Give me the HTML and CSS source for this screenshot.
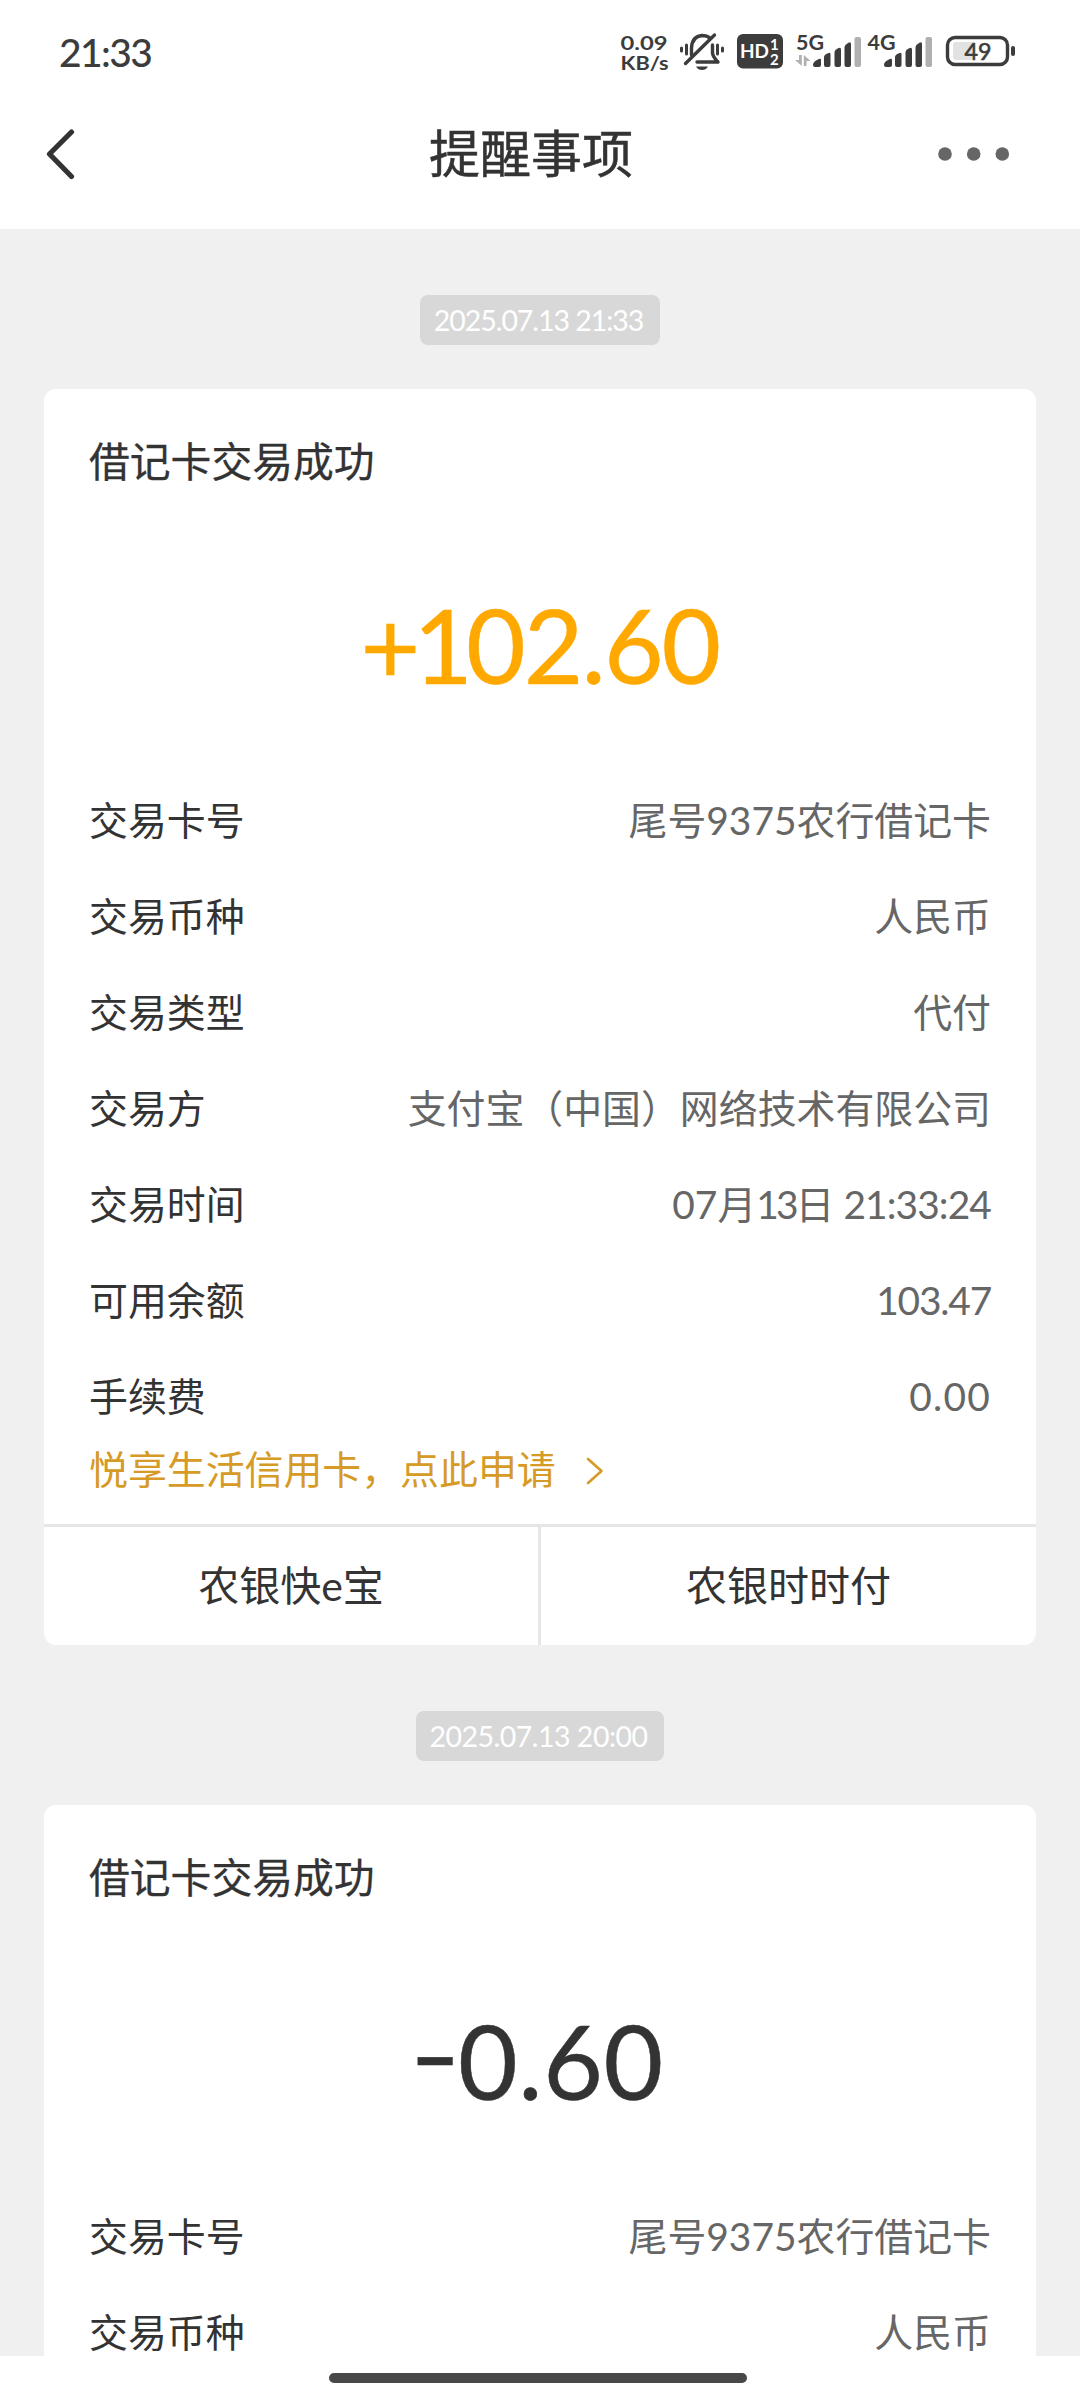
FILE: index.html
```html
<!DOCTYPE html>
<html lang="zh-CN">
<head>
<meta charset="UTF-8">
<title>提醒事项</title>
<link rel="stylesheet" href="styles.css">
</head>
<body>
<div class="status">
  <span class="clock">21:33</span>
  <svg class="status-icons" width="400" height="56" viewBox="616 25 400 56">
    <g class="net">
      <text x="620.5" y="51" textLength="47" lengthAdjust="spacingAndGlyphs">0.09</text>
      <text x="620.5" y="70.500" textLength="48" lengthAdjust="spacingAndGlyphs">KB/s</text>
    </g>
    <!-- muted bell -->
    <g fill="none" stroke="#3c3c3c" stroke-width="3.4" stroke-linecap="round" stroke-linejoin="round">
      <path d="M691.500 56V49Q692 37.500 702 36.500Q707 36.500 710 39"/>
      <path d="M685.500 64.500L714.500 36"/>
      <path d="M712.500 46V54Q713 58 718 63H697"/>
      <path d="M681.500 49V52M686.500 46V55M717.500 46V55M722.500 49V52" stroke-width="3"/>
    </g>
    <path d="M696 67.500H708Q706 71 702 71Q698 71 696 67.500Z" fill="#3c3c3c"/>
    <rect x="737" y="35" width="46" height="34.500" rx="6" fill="#3c3c3c"/>
    <text class="hd" x="740" y="59" textLength="29" lengthAdjust="spacingAndGlyphs">HD</text>
    <text class="hd-sub" x="770" y="50.500">1</text>
    <text class="hd-sub" x="770" y="65.500">2</text>
    <text class="gen" x="796" y="50.500" textLength="28" lengthAdjust="spacingAndGlyphs">5G</text>
    <g fill="#b0b0b0">
      <path d="M799 56H801.800V67L795 61H799ZM803.800 67V56L810.500 62H806.500V67Z"/>
      <rect x="854.500" y="38" width="6.500" height="30" rx="2"/>
      <rect x="925.500" y="38" width="6.500" height="30" rx="2"/>
    </g>
    <g fill="#3c3c3c">
      <path d="M813 66Q813 63 817 61Q821 58.500 821 61V66Q821 68 819 68H815Q813 68 813 66Z"/>
      <path d="M824 58Q824 56 828 54.300Q830.500 53 830.500 55.500V66Q830.500 68 828.500 68H826Q824 68 824 66Z"/>
      <path d="M834.500 53Q834.500 51 838 49.300Q841 47.800 841 50.500V66Q841 68 839 68H836.500Q834.500 68 834.500 66Z"/>
      <path d="M844.500 48Q844.500 46 848 44Q851 42 851 45V66Q851 68 849 68H846.500Q844.500 68 844.500 66Z"/>
      <path d="M884 66Q884 63 888 61Q892 58.500 892 61V66Q892 68 890 68H886Q884 68 884 66Z"/>
      <path d="M895 58Q895 56 899 54.300Q901.500 53 901.500 55.500V66Q901.500 68 899.500 68H897Q895 68 895 66Z"/>
      <path d="M905.500 53Q905.500 51 909 49.300Q912 47.800 912 50.500V66Q912 68 910 68H907.500Q905.500 68 905.500 66Z"/>
      <path d="M915.500 48Q915.500 46 919 44Q922 42 922 45V66Q922 68 920 68H917.500Q915.500 68 915.500 66Z"/>
      <rect x="1011" y="47" width="4" height="10" rx="2"/>
    </g>
    <text class="gen" x="867.500" y="50.500" textLength="28" lengthAdjust="spacingAndGlyphs">4G</text>
    <rect x="947.500" y="38.500" width="60" height="27" rx="7.500" fill="none" stroke="#3c3c3c" stroke-width="3.400"/>
    <rect x="953" y="43" width="21" height="18" rx="3" fill="#e2e2e2"/>
    <text class="batt" x="964.500" y="61" textLength="27" lengthAdjust="spacingAndGlyphs">49</text>
  </svg>
</div>
<header class="nav">
  <svg class="back" width="32" height="52" viewBox="0 0 32 52"><path d="M27.500 4L5.500 26L27.500 48.500" fill="none" stroke="#333" stroke-width="5.200" stroke-linecap="round" stroke-linejoin="round"/></svg>
  <h1 class="nav-title">提醒事项</h1>
  <svg class="more" width="72" height="14" viewBox="0 0 72 14" fill="#666"><circle cx="7" cy="7" r="6.800"/><circle cx="35.700" cy="7" r="6.800"/><circle cx="64.300" cy="7" r="6.800"/></svg>
</header>
<main class="feed">
  <time class="stamp stamp-a">2025.07.13 21:33</time>
  <section class="card">
    <h2 class="card-title">借记卡交易成功</h2>
    <p class="amount amount-in"><span class="tight">+1</span>02.60</p>
    <dl class="rows">
      <div class="row"><dt>交易卡号</dt><dd>尾号<span class="num">9375</span>农行借记卡</dd></div>
      <div class="row"><dt>交易币种</dt><dd>人民币</dd></div>
      <div class="row"><dt>交易类型</dt><dd>代付</dd></div>
      <div class="row"><dt>交易方</dt><dd>支付宝（中国）网络技术有限公司</dd></div>
      <div class="row"><dt>交易时间</dt><dd><span class="num">07</span>月<span class="num num-month">13</span>日<span class="num num-clock"> 21:33:24</span></dd></div>
      <div class="row"><dt>可用余额</dt><dd><span class="num num-tight">103.47</span></dd></div>
      <div class="row"><dt>手续费</dt><dd><span class="num num-wide">0.00</span></dd></div>
    </dl>
    <a class="promo">悦享生活信用卡，点此申请
      <svg class="chev" width="18" height="28" viewBox="0 0 18 28"><path d="M2 2L15.500 14L2 26" fill="none" stroke="#d69a26" stroke-width="2.600" stroke-linecap="round" stroke-linejoin="round"/></svg>
    </a>
    <div class="actions"><a class="action">农银快e宝</a><a class="action">农银时时付</a></div>
  </section>
  <time class="stamp stamp-b">2025.07.13 20:00</time>
  <section class="card">
    <h2 class="card-title">借记卡交易成功</h2>
    <p class="amount amount-out"><span class="sign">-</span>0.60</p>
    <dl class="rows">
      <div class="row"><dt>交易卡号</dt><dd>尾号<span class="num">9375</span>农行借记卡</dd></div>
      <div class="row"><dt>交易币种</dt><dd>人民币</dd></div>
    </dl>
  </section>
</main>
<footer class="home"><div class="home-bar"></div></footer>
</body>
</html>
```
FILE: styles.css
```css
* { box-sizing: border-box; margin: 0; padding: 0; }
body {
  width: 1080px;
  height: 2400px;
  display: flex;
  flex-direction: column;
  overflow: hidden;
  background: #fff;
  color: #333;
  font-family: Lato, "Noto Sans CJK SC", sans-serif;
}
.status {
  height: 104px;
  padding: 0 64px 0 59px;
  display: flex;
  align-items: center;
  justify-content: space-between;
}
.clock { font-size: 39px; line-height: 48px; font-weight: 500; letter-spacing: -1.6px; color: #3c3c3c; }
.status-icons { display: block; }
.status-icons text { font-family: Lato, sans-serif; font-weight: 700; fill: #3c3c3c; }
.net { font-size: 19.5px; }
.status-icons .hd { font-size: 18.5px; fill: #fff; }
.status-icons .hd-sub { font-size: 15px; fill: #fff; }
.gen { font-size: 21px; }
.status-icons .batt { font-size: 24px; font-weight: 400; stroke: #3c3c3c; stroke-width: 0.6px; }
.nav {
  height: 125px;
  padding: 0 70px 25px 44px;
  display: grid;
  grid-template-columns: 100px 1fr 92px;
  align-items: center;
}
.more { justify-self: end; }
.nav-title { font-size: 51px; line-height: 60px; font-weight: 400; text-align: center; -webkit-text-stroke: 0.5px #333; }
.feed {
  height: 2127px;
  padding: 66px 44px 0;
  display: flex;
  flex-direction: column;
  align-items: center;
  overflow: hidden;
  background: #f0f0f0;
}
.stamp {
  flex: none;
  height: 50px;
  padding-right: 3px;
  border-radius: 8px;
  background: #d8d8d8;
  color: #fff;
  font-size: 28.5px;
  line-height: 50px;
  text-align: center;
  white-space: nowrap;
}
.stamp-a { width: 240px; letter-spacing: -1.05px; }
.stamp-b { width: 248px; letter-spacing: -0.5px; }
.card { flex: none; width: 992px; margin: 44px 0 66px; border-radius: 12px; background: #fff; overflow: hidden; }
.card-title { padding: 48px 45px 0; font-size: 40.8px; line-height: 50px; font-weight: 400; -webkit-text-stroke: 0.3px #333; }
.amount { margin-top: 92px; height: 131px; font-size: 103px; line-height: 130px; text-align: center; letter-spacing: -1px; white-space: nowrap; }
.amount-in { color: #ffa800; letter-spacing: -2px; -webkit-text-stroke: 0.5px #ffa800; }
.amount-out { color: #333; letter-spacing: 0.5px; -webkit-text-stroke: 0.5px #333; }
.tight { letter-spacing: -7px; }
.sign { display: inline-block; vertical-align: 8px; line-height: 0; transform: scaleX(1.35); margin-right: 3px; }
.rows { padding: 62px 45px 0; }
.row { height: 96px; display: flex; justify-content: space-between; align-items: center; font-size: 38.9px; line-height: 50px; white-space: nowrap; }
.row dd { color: #666; }
.num-tight { letter-spacing: -1.2px; }
.num-month { letter-spacing: -3px; }
.num-clock { letter-spacing: -0.9px; }
.num-wide { letter-spacing: 1.2px; }
.promo { height: 80px; padding: 0 45px; display: flex; align-items: flex-start; gap: 30px; font-size: 38.9px; line-height: 50px; color: #d69a26; }
.chev { margin-top: 13px; }
.actions { height: 121px; display: grid; grid-template-columns: 497px 1fr; border-top: 3px solid #e6e6e6; }
.action { font-size: 41px; line-height: 118px; text-align: center; }
.action:first-child { border-right: 3px solid #e6e6e6; }
.home { height: 44px; padding-top: 17px; display: flex; justify-content: center; align-items: flex-start; }
.home-bar { width: 418px; height: 10px; border-radius: 5px; background: #484848; margin-right: 4px; }
```
